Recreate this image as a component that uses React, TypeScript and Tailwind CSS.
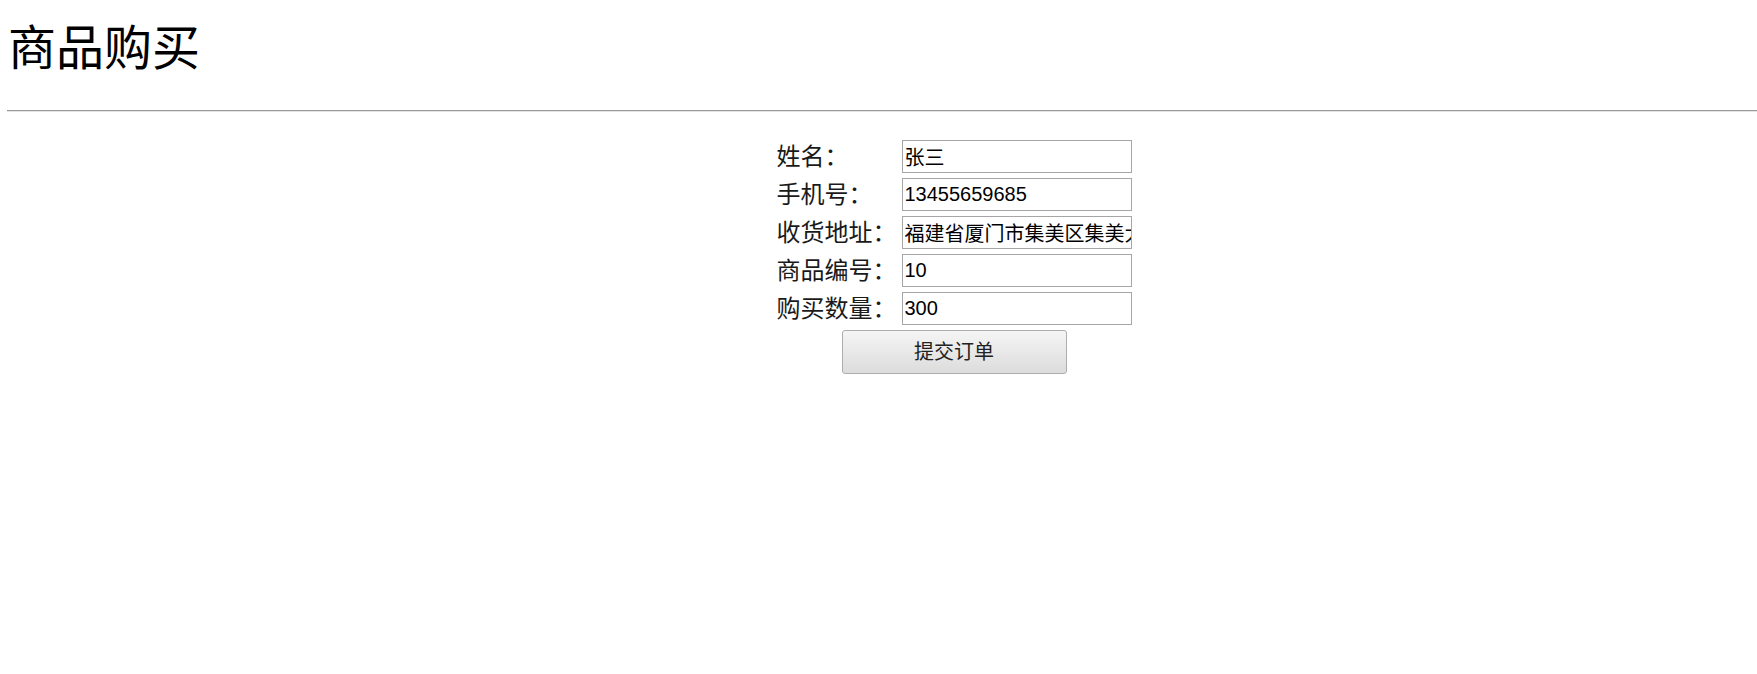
import React, { useState } from 'react';

const cjk = "font-['Liberation_Sans','Noto_Sans_CJK_SC',sans-serif]";

const fields = [
  { key: 'name', label: '姓名：', value: '张三' },
  { key: 'phone', label: '手机号：', value: '13455659685' },
  { key: 'address', label: '收货地址：', value: '福建省厦门市集美区集美大学' },
  { key: 'goodsId', label: '商品编号：', value: '10' },
  { key: 'count', label: '购买数量：', value: '300' },
];

const App: React.FC = () => {
  const [form, setForm] = useState<Record<string, string>>(
    Object.fromEntries(fields.map(f => [f.key, f.value]))
  );

  const handleSubmit = (e: React.FormEvent) => {
    e.preventDefault();
  };

  return (
    <div className={`w-full min-h-[674px] overflow-hidden bg-white text-black ${cjk}`}>
      <div className="w-[1901px] pl-[7px]">
        <h1 className="pt-[25px] pl-[1px] text-[48px] leading-[48px] font-normal">商品购买</h1>
        <hr className="mt-[37px] h-[2px] border-0 border-t border-t-[#9a9a9a] border-b border-b-[#e4e4e4]" />
        <form onSubmit={handleSubmit} className="mt-[28px] flex flex-col items-center">
          <div className="flex flex-col gap-[5px]">
            {fields.map(f => (
              <div key={f.key} className="flex items-center h-[33px]">
                <label htmlFor={f.key} className="w-[125px] text-[24px] leading-none text-[#1a1a1a] whitespace-nowrap">
                  {f.label}
                </label>
                <input
                  id={f.key}
                  type="text"
                  value={form[f.key]}
                  onChange={e => setForm({ ...form, [f.key]: e.target.value })}
                  className="w-[230px] h-[33px] border border-[#a6a6a6] pl-[2px] pr-0 text-[20px] text-black outline-none"
                />
              </div>
            ))}
          </div>
          <button
            type="submit"
            className="mt-[5px] w-[225px] h-[44px] rounded-[3px] border border-[#adadad] bg-gradient-to-b from-[#f5f5f5] to-[#dcdcdc] text-[20px] text-[#222]"
          >
            提交订单
          </button>
        </form>
      </div>
    </div>
  );
};

export default App;
